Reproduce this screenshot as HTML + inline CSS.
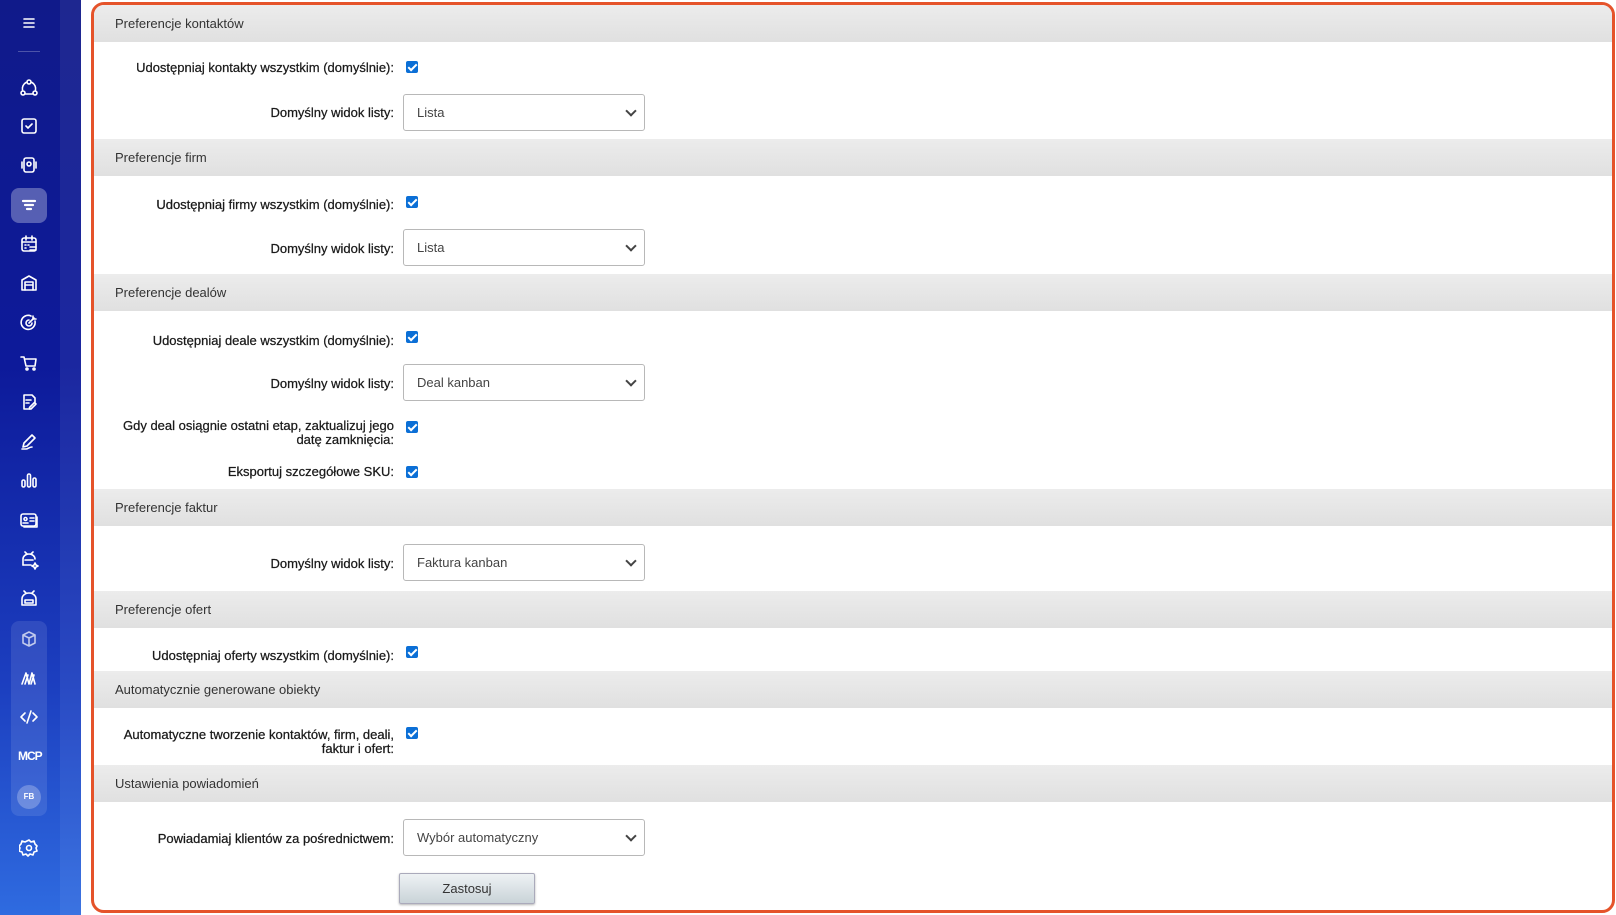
<!DOCTYPE html>
<html><head><meta charset="utf-8"><style>
*{box-sizing:border-box;margin:0;padding:0}
body{width:1616px;height:915px;overflow:hidden;background:#fff;font-family:"Liberation Sans",sans-serif;font-size:13px;color:#333;position:relative}
#sb{position:absolute;left:0;top:0;width:81px;height:915px;background:linear-gradient(180deg,#101a8a 0%,#0d1a9a 40%,#1c3fc0 75%,#2f6be0 100%)}
#sb .col{position:absolute;left:60px;top:0;width:21px;height:915px;background:rgba(255,255,255,0.06)}
.ic{position:absolute;left:19px;width:20px;height:20px}
.ic svg{width:20px;height:20px;fill:none;stroke:#fff;stroke-width:1.6;stroke-linecap:round;stroke-linejoin:round}
#frame{position:absolute;left:91px;top:2px;width:1524px;height:911px;border:3px solid #e5532a;border-radius:13px;overflow:hidden;background:#fff}
.h{position:absolute;left:0;right:0;height:37px;background:linear-gradient(#ececec,#e0e0e0);padding-left:21px;line-height:37px;font-size:13px;color:#333}
.l{position:absolute;right:1218px;text-align:right;font-size:13px;color:#1a1a1a;line-height:14px;-webkit-text-stroke:0.25px #1a1a1a}
.cb{position:absolute;left:312px;width:12px;height:12px;border-radius:2px;background:#0b6fd6}
.cb:after{content:"";position:absolute;left:4px;top:1px;width:3px;height:7px;border:solid #fff;border-width:0 2px 2px 0;transform:rotate(45deg)}
.sel{position:absolute;left:309px;width:242px;height:37px;border:1px solid #b8b8b8;border-radius:3px;padding-left:13px;line-height:35px;color:#444;font-size:13px}
.sel:after{content:"";position:absolute;right:9px;top:12px;width:6px;height:6px;border:solid #444;border-width:0 2px 2px 0;transform:rotate(45deg)}
.btn{position:absolute;left:305px;top:868px;width:136px;height:31px;border:1px solid #aab;border-radius:2px;background:linear-gradient(#eef2f4,#c9d3d8);text-align:center;line-height:29px;font-size:13px;color:#333;box-shadow:0 1px 2px rgba(0,0,0,.3)}
</style></head><body>
<div id="sb"><div class="col"></div>
<div style="position:absolute;left:18px;top:51px;width:22px;height:1px;background:rgba(255,255,255,.25)"></div>
<div style="position:absolute;left:11px;top:188px;width:36px;height:35px;border-radius:8px;background:rgba(255,255,255,.3)"></div>
<div style="position:absolute;left:11px;top:621px;width:36px;height:195px;border-radius:8px;background:rgba(255,255,255,.1)"></div>
<div class="ic" style="top:13px"><svg viewBox="0 0 20 20"><path d="M5 6h10M5 10h10M5 14h10"/></svg></div>
<div class="ic" style="top:78px"><svg viewBox="0 0 20 20"><circle cx="10" cy="4" r="2"/><circle cx="4" cy="15" r="2"/><circle cx="16" cy="15" r="2"/><path d="M7 4.5A7 7 0 0 0 3.5 12M13 4.5A7 7 0 0 1 16.5 12M6.5 16h7"/></svg></div>
<div class="ic" style="top:116px"><svg viewBox="0 0 20 20"><rect x="3" y="3" width="14" height="14" rx="2"/><path d="M7 10l2 2 4-4"/></svg></div>
<div class="ic" style="top:155px"><svg viewBox="0 0 20 20"><rect x="5" y="3" width="10" height="14" rx="2"/><circle cx="10" cy="9" r="2"/><path d="M3 7v6M17 7v6"/></svg></div>
<div class="ic" style="top:195px"><svg viewBox="0 0 20 20" style="stroke-width:2.2"><path d="M4 6h12M6 10h8M8 14h4"/></svg></div>
<div class="ic" style="top:234px"><svg viewBox="0 0 20 20"><rect x="3" y="4" width="14" height="13" rx="2"/><path d="M3 8h14M7 2v4M13 2v4M6 11h1M9 11h1M6 14h1M11 13h6M11 16h6"/></svg></div>
<div class="ic" style="top:273px"><svg viewBox="0 0 20 20"><path d="M3 17V7l7-4 7 4v10z"/><path d="M6 17V9h8v8M6 12h8"/></svg></div>
<div class="ic" style="top:313px"><svg viewBox="0 0 20 20"><path d="M16 8a7 7 0 1 1-4-5"/><path d="M13 10a3 3 0 1 1-3-3"/><path d="M10 10l5-5M14 3v3h3"/></svg></div>
<div class="ic" style="top:353px"><svg viewBox="0 0 20 20"><path d="M2 4h3l2 9h9l1-7H6"/><circle cx="8" cy="16" r="1"/><circle cx="15" cy="16" r="1"/></svg></div>
<div class="ic" style="top:392px"><svg viewBox="0 0 20 20"><path d="M11 17H5V3h8l3 3v4M7 8h5M7 11h3"/><path d="M12 17l5-5-1.5-1.5-5 5V17z"/></svg></div>
<div class="ic" style="top:431px"><svg viewBox="0 0 20 20"><path d="M4 16l1-4 8-8 3 3-8 8zM3 18h4c2 0 3-2 6-2"/></svg></div>
<div class="ic" style="top:470px"><svg viewBox="0 0 20 20"><rect x="3" y="10" width="3" height="7" rx="1.5"/><rect x="8.5" y="4" width="3" height="13" rx="1.5"/><rect x="14" y="8" width="3" height="9" rx="1.5"/></svg></div>
<div class="ic" style="top:510px"><svg viewBox="0 0 20 20"><rect x="2" y="4" width="15" height="12" rx="2"/><circle cx="6.5" cy="9" r="1.5"/><path d="M4 13h5M11 8h4M11 11h4M18 7v10H5"/></svg></div>
<div class="ic" style="top:550px"><svg viewBox="0 0 20 20"><path d="M4 15V9a6 5 0 0 1 12 0"/><path d="M4 15h8M6 10h8M8 4l-2-2M12 4l2-2M16 13l1 2 2 1-2 1-1 2-1-2-2-1 2-1z"/></svg></div>
<div class="ic" style="top:589px"><svg viewBox="0 0 20 20"><path d="M3 16V10a7 6 0 0 1 14 0v6z"/><path d="M6 11h8v3H6zM7 4L5 2M13 4l2-2"/></svg></div>
<div class="ic" style="top:629px;opacity:.7"><svg viewBox="0 0 20 20"><path d="M10 3l6 3v8l-6 3-6-3V6zM4 6l6 3 6-3M10 9v8"/></svg></div>
<div class="ic" style="top:668px"><svg viewBox="0 0 20 20"><path d="M3 16l4-11 3 11 3-11 3 11M6 16l3-9M12 16l3-9"/></svg></div>
<div class="ic" style="top:707px"><svg viewBox="0 0 20 20"><path d="M6 6l-4 4 4 4M14 6l4 4-4 4M12 4l-4 12"/></svg></div>
<div style="position:absolute;left:18px;top:749px;color:#fff;font-weight:bold;font-size:12px;letter-spacing:-1px">MCP</div>
<div style="position:absolute;left:17px;top:785px;width:24px;height:24px;border-radius:12px;background:rgba(255,255,255,.25);color:#fff;font-size:8px;font-weight:bold;text-align:center;line-height:24px">FB</div>
<div class="ic" style="top:838px"><svg viewBox="0 0 20 20"><circle cx="10" cy="10" r="2.5"/><path d="M10 2l2 2 3-1 1 3 2 2-1 2 1 3-3 1-1 3-3-1-2 2-2-2-3 1-1-3-3-1 1-3-1-2 2-2 1-3 3 1z"/></svg></div>
</div>
<div id="frame">
<div class="h" style="top:0">Preferencje kontaktów</div>
<div class="l" style="top:56px">Udostępniaj kontakty wszystkim (domyślnie):</div><div class="cb" style="top:56px"></div>
<div class="l" style="top:101px">Domyślny widok listy:</div><div class="sel" style="top:89px">Lista</div>
<div class="h" style="top:134px">Preferencje firm</div>
<div class="l" style="top:193px">Udostępniaj firmy wszystkim (domyślnie):</div><div class="cb" style="top:191px"></div>
<div class="l" style="top:237px">Domyślny widok listy:</div><div class="sel" style="top:224px">Lista</div>
<div class="h" style="top:269px">Preferencje dealów</div>
<div class="l" style="top:329px">Udostępniaj deale wszystkim (domyślnie):</div><div class="cb" style="top:326px"></div>
<div class="l" style="top:372px">Domyślny widok listy:</div><div class="sel" style="top:359px">Deal kanban</div>
<div class="l" style="top:414px">Gdy deal osiągnie ostatni etap, zaktualizuj jego<br>datę zamknięcia:</div><div class="cb" style="top:416px"></div>
<div class="l" style="top:460px">Eksportuj szczegółowe SKU:</div><div class="cb" style="top:461px"></div>
<div class="h" style="top:484px">Preferencje faktur</div>
<div class="l" style="top:552px">Domyślny widok listy:</div><div class="sel" style="top:539px">Faktura kanban</div>
<div class="h" style="top:586px">Preferencje ofert</div>
<div class="l" style="top:644px">Udostępniaj oferty wszystkim (domyślnie):</div><div class="cb" style="top:641px"></div>
<div class="h" style="top:666px">Automatycznie generowane obiekty</div>
<div class="l" style="top:723px">Automatyczne tworzenie kontaktów, firm, deali,<br>faktur i ofert:</div><div class="cb" style="top:722px"></div>
<div class="h" style="top:760px">Ustawienia powiadomień</div>
<div class="l" style="top:827px">Powiadamiaj klientów za pośrednictwem:</div><div class="sel" style="top:814px">Wybór automatyczny</div>
<div class="btn">Zastosuj</div>
</div>
</body></html>
